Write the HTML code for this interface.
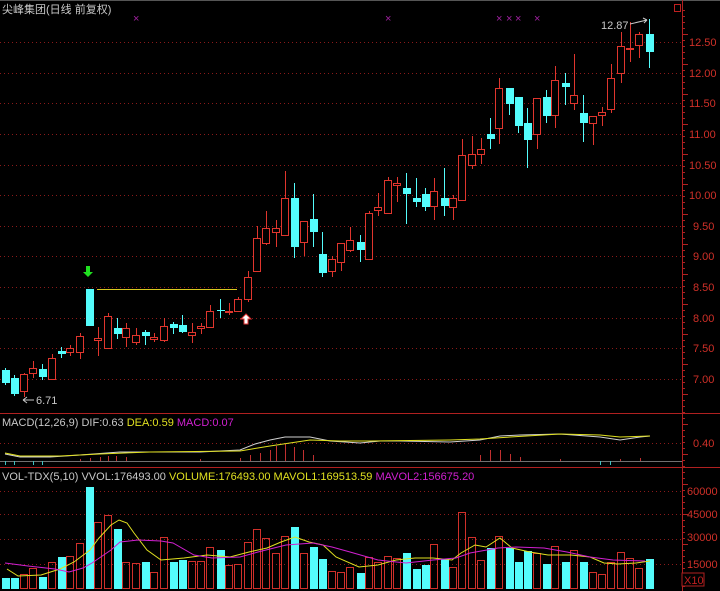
<!DOCTYPE html>
<html><head><meta charset="utf-8"><style>
html,body{margin:0;padding:0;background:#000;width:720px;height:591px;overflow:hidden}
svg{display:block}
text{font-family:"Liberation Sans","Noto Sans CJK SC",sans-serif;font-size:11px}
</style></head><body>
<svg id="s" width="720" height="591" xmlns="http://www.w3.org/2000/svg">
<rect width="720" height="591" fill="#000"/>
<line x1="0" y1="0.5" x2="720" y2="0.5" stroke="#555"/>
<g id="grid" stroke="#8a1a1a" stroke-dasharray="1,3" stroke-width="1"></g>
<line x1="682.5" y1="0" x2="682.5" y2="591" stroke="#b02020"/>
<line x1="0" y1="413.5" x2="720" y2="413.5" stroke="#b02020"/>
<line x1="0" y1="467.5" x2="720" y2="467.5" stroke="#b02020"/>
<rect x="674.5" y="4.5" width="6" height="7" fill="none" stroke="#c02020"/>
<g id="ticks" stroke="#b02020"></g>
<g fill="#d03028">
<text x="689" y="46">12.50</text><text x="689" y="77">12.00</text><text x="689" y="107">11.50</text>
<text x="689" y="138">11.00</text><text x="689" y="169">10.50</text><text x="689" y="199">10.00</text>
<text x="693" y="230">9.50</text><text x="693" y="260">9.00</text><text x="693" y="291">8.50</text>
<text x="693" y="322">8.00</text><text x="693" y="352">7.50</text><text x="693" y="383">7.00</text>
<text x="693" y="447">0.40</text>
<text x="687" y="495">60000</text><text x="687" y="518">45000</text><text x="687" y="541">30000</text><text x="687" y="568">15000</text>
</g>
<rect x="682" y="573" width="22" height="13" fill="#000" stroke="#b02020"/>
<text x="684" y="584" fill="#c02020">X10</text>
<text x="2" y="13" fill="#c8c8c8" font-size="12">尖峰集团(日线 前复权)</text>
<g fill="#a020a0" font-size="8"><text x="133" y="22">×</text><text x="385" y="22">×</text><text x="496" y="22">×</text><text x="506" y="22">×</text><text x="515" y="22">×</text><text x="534" y="22">×</text></g>
<line x1="97" y1="289.5" x2="237" y2="289.5" stroke="#d8c820"/>
<g id="c"></g>
<text x="36" y="404" fill="#c8c8c8">6.71</text>
<path d="M23 400 H34 M23 400 l4 -3 M23 400 l4 3" stroke="#c8c8c8" fill="none"/>
<text x="601" y="29" fill="#c8c8c8">12.87</text>
<path d="M630 24 L647 20 M647 20 l-4 -2 M647 20 l-3 3" stroke="#c8c8c8" fill="none"/>
<path d="M86 266 h4 v6 h3 l-5 5 l-5 -5 h3z" fill="#20e020"/>
<path d="M244 324 h4 v-5 h3 l-5 -5 l-5 5 h3z" fill="#fff" stroke="#e03030"/>
<g id="macd"></g>
<text x="2" y="426" fill="#c8c8c8">MACD(12,26,9) <tspan>DIF:0.63</tspan> <tspan fill="#e0e020">DEA:0.59</tspan> <tspan fill="#d020d0">MACD:0.07</tspan></text>
<g id="v"></g>
<text x="2" y="480" fill="#c8c8c8">VOL-TDX(5,10) VVOL:176493.00 <tspan fill="#e0e020">VOLUME:176493.00 MAVOL1:169513.59</tspan> <tspan fill="#d020d0">MAVOL2:156675.20</tspan></text>
</svg>
<script>
var NS="http://www.w3.org/2000/svg";
function el(p,t,a){var e=document.createElementNS(NS,t);for(var k in a)e.setAttribute(k,a[k]);document.getElementById(p).appendChild(e);return e;}
[42,73,103,134,165,195,226,256,287,318,348,379,443,491,514,539,564].forEach(function(y){el("grid","line",{x1:0,x2:682,y1:y+.5,y2:y+.5});});
for(var y=10;y<588;y+=6)el("ticks","line",{x1:682,x2:(y%30<6?688:685),y1:y+.5,y2:y+.5});
var C=[
["c",370,383,368,385],["c",378,394,375,396],["r",374,391,373,397],["r",368,373,361,378],["c",369,377,364,380],
["r",358,379,354,380],["c",351,354,347,358],["r",348,352,345,356],["r",336,352,333,359],["c",289,326,289,326],
["r",338,340,327,356],["r",316,348,313,348],["c",328,334,318,339],["r",328,337,323,347],["r",335,342,328,345],
["c",332,336,330,345],["r",337,339,333,342],["r",326,340,318,342],["c",324,328,322,334],["c",325,332,315,333],
["r",332,335,323,343],["r",326,328,323,334],["r",311,327,305,328],["c",310,311,299,318],["r",311,312,303,315],
["r",299,311,297,312],["r",277,299,271,302],["r",238,271,226,271],["r",228,243,211,245],["r",228,232,220,247],
["r",198,235,171,235],["c",198,247,183,258],["r",221,242,221,256],["c",219,232,194,247],["c",254,273,232,277],
["r",259,271,256,277],["r",243,262,243,271],["r",240,250,227,252],["c",242,250,235,262],["r",213,259,211,259],
["r",207,210,193,216],["r",180,213,177,213],["r",183,185,177,202],["c",188,194,173,224],["c",198,202,178,207],
["c",194,207,188,211],["r",191,206,178,220],["c",198,206,168,216],["r",198,207,195,220],["r",155,200,139,200],
["r",154,165,136,169],["r",149,154,138,164],["c",134,139,118,149],["r",88,128,78,144],["c",88,104,88,115],
["c",97,126,97,133],["c",123,140,108,168],["r",98,134,98,149],["c",97,116,90,123],["r",80,115,66,128],
["c",83,87,73,105],["r",95,103,54,110],["c",113,123,95,142],["r",116,123,116,145],["r",112,115,107,126],
["r",78,109,64,113],["r",46,73,32,83],["r",48,49,22,62],["r",34,45,32,58],["c",34,52,19,68]];
var V=[578,578,574,568,577,562,557,556,543,487,522,515,529,562,563,562,572,537,562,560,561,561,547,550,565,564,542,529,538,553,536,527,553,547,559,571,572,567,573,557,562,556,558,553,569,565,544,559,567,512,537,560,548,536,548,562,551,553,564,546,562,550,562,572,574,562,552,558,568,559];
var RED="#e0352d",CY="#54fcfc";
C.forEach(function(d,i){var x=Math.round(5+9.33*i);
 var col=d[0]=="r"?RED:CY;
 el("c","line",{x1:x+.5,x2:x+.5,y1:d[3],y2:d[4],stroke:col});
 var h=Math.max(1,d[2]-d[1]);
 if(d[0]=="r")el("c","rect",{x:x-3.5,y:d[1]+.5,width:7,height:h,fill:"#000",stroke:col});
 else el("c","rect",{x:x-3,y:d[1],width:8,height:h,fill:col});
 var vy=V[i];
 if(d[0]=="r")el("v","rect",{x:x-3.5,y:vy+.5,width:7,height:588-vy,fill:"none",stroke:"#d0302a"});
 else el("v","rect",{x:x-3,y:vy,width:8,height:589-vy,fill:CY});
});
function pl(p,pts,col){el(p,"polyline",{points:pts,fill:"none",stroke:col,"stroke-width":1});}
pl("v","7,569 18,576 41,575 60,569 74,562 90,550 99,538 111,525 119,520 127,523 134,533 147,550 161,560 184,558 207,555 230,557 249,552 267,548 281,542 295,537 309,542 323,545 336,557 359,567 378,565 396,560 415,558 433,558 452,560 461,553 475,545 486,547 500,538 512,548 530,552 548,555 571,555 590,557 604,563 618,564 636,563 650,561","#e0e020");
pl("v","5,563 28,566 55,569 69,572 83,568 92,563 111,550 120,542 138,540 161,541 173,543 194,555 212,558 240,557 258,552 286,545 313,543 332,547 350,552 378,560 406,563 433,560 456,558 470,553 498,548 516,547 544,548 567,552 590,557 613,560 645,561","#d020d0");
el("macd","line",{x1:0,x2:682,y1:461.5,y2:461.5,stroke:"#707070"});
[[80,459],[90,458],[100,457],[108,456],[116,456],[126,457],[200,459],[240,458],[250,455],[260,453],[270,450],[276,446],[285,444],[294,447],[303,450],[313,455],[480,455],[490,450],[500,450],[510,454],[520,457],[560,459],[620,459],[640,458]].forEach(function(b){el("macd","line",{x1:b[0]+.5,x2:b[0]+.5,y1:b[1],y2:461,stroke:"#c03030"});});
[5,14,33,42,600,610].forEach(function(x){el("macd","line",{x1:x+.5,x2:x+.5,y1:461,y2:465,stroke:"#40c0c0"});});
pl("macd","5,454 20,457 50,457 80,455 120,452 200,452 240,450 255,444 270,440 285,437 310,437 330,441 360,443 380,441 400,441 450,442 480,440 500,436 520,435 560,434 600,437 620,440 640,437 650,436","#d0d0d0");
pl("macd","5,453 20,456 60,456 100,454 150,452 240,451 270,446 310,440 340,441 370,441 450,440 480,439 510,437 560,434 600,435 620,437 650,436","#e0e020");
</script>
</body></html>
